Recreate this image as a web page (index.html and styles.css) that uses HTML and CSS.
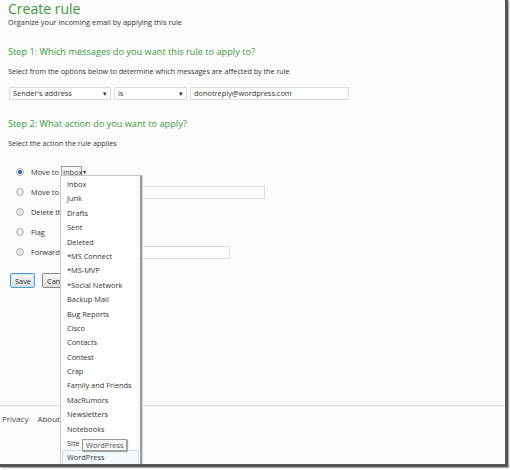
FILE: index.html
```html
<!DOCTYPE html>
<html>
<head>
<meta charset="utf-8">
<link rel="stylesheet" href="styles.css">
</head>
<body>
<div class="window">
  <div class="content">
    <h1 class="title">Create rule</h1>
    <p class="desc">Organize your incoming email by applying this rule</p>

    <h2 class="step">Step 1: Which messages do you want this rule to apply to?</h2>
    <p class="note">Select from the options below to determine which messages are affected by the rule</p>
    <div class="criteria">
      <div class="sel sel-field"><span>Sender's address</span><span class="arrow">&#9662;</span></div>
      <div class="sel sel-op"><span>is</span><span class="arrow">&#9662;</span></div>
      <div class="textbox tb-value">donotreply@wordpress.com</div>
    </div>

    <h2 class="step step2">Step 2: What action do you want to apply?</h2>
    <p class="note">Select the action the rule applies</p>

    <div class="actions">
      <div class="action">
        <span class="radio checked"></span>
        <span class="label">Move to</span>
        <span class="mini-sel">Inbox</span><span class="mini-arrow">&#9662;</span>
      </div>
      <div class="action">
        <span class="radio"></span>
        <span class="label">Move to</span>
        <span class="textbox tb-move"></span>
      </div>
      <div class="action">
        <span class="radio"></span>
        <span class="label">Delete the message</span>
      </div>
      <div class="action">
        <span class="radio"></span>
        <span class="label">Flag</span>
      </div>
      <div class="action">
        <span class="radio"></span>
        <span class="label">Forward to</span>
        <span class="textbox tb-forward"></span>
      </div>
    </div>

    <div class="buttons">
      <button class="btn btn-save">Save</button>
      <button class="btn">Cancel</button>
    </div>
  </div>

  <div class="footer">
    <span>Privacy</span>
    <span>About</span>
  </div>

  <ul class="dropdown">
    <li>Inbox</li>
    <li>Junk</li>
    <li>Drafts</li>
    <li>Sent</li>
    <li>Deleted</li>
    <li>*MS Connect</li>
    <li>*MS-MVP</li>
    <li>*Social Network</li>
    <li>Backup Mail</li>
    <li>Bug Reports</li>
    <li>Cisco</li>
    <li>Contacts</li>
    <li>Contest</li>
    <li>Crap</li>
    <li>Family and Friends</li>
    <li>MacRumors</li>
    <li>Newsletters</li>
    <li>Notebooks</li>
    <li>Site Mail</li>
    <li class="hover">WordPress</li>
  </ul>
  <div class="tooltip">WordPress</div>
</div>
</body>
</html>
```

FILE: styles.css
```css
* { box-sizing: border-box; }
html, body { margin: 0; padding: 0; background: #ffffff; }
body {
  font-family: "Open Sans", "Noto Sans", sans-serif;
  color: #333;
  width: 510px;
  height: 470px;
  overflow: hidden;
}
.window {
  position: relative;
  width: 508px;
  height: 467px;
  background: #fcfcfc;
  border-right: 3px solid #555;
  border-bottom: 3px solid #555;
  box-shadow: 1px 1px 1px #aaa;
  overflow: hidden;
  display: flex;
  flex-direction: column;
}
.content {
  padding: 0 8px;
  flex: 1;
}
.title {
  margin: 0;
  padding-top: 1px;
  font-weight: normal;
  font-size: 14px;
  line-height: 16px;
  color: #3a9a3a;
}
.desc {
  margin: 0;
  font-size: 7.4px;
  line-height: 10px;
  margin-top: 0;
  color: #333;
}
.step {
  margin: 18px 0 0 0;
  font-weight: normal;
  font-size: 9.2px;
  line-height: 13px;
  color: #3a9a3a;
}
.step2 { margin-top: 17px; }
.note {
  margin: 8px 0 0 0;
  font-size: 7.2px;
  line-height: 10px;
}
.criteria {
  display: flex;
  align-items: center;
  gap: 3px;
  margin-top: 11px;
  padding-left: 1px;
}
.sel, .textbox {
  height: 13px;
  border: 1px solid #dcdcdc;
  background: #fff;
  font-size: 7.4px;
  line-height: 11px;
  padding: 0 3px;
  display: flex;
  justify-content: space-between;
  align-items: center;
  color: #333;
}
.arrow { font-size: 7px; color: #333; }
.sel-field { width: 102px; }
.sel-op { width: 73px; }
.tb-value { width: 159px; }
.actions {
  margin-top: 14px;
  display: flex;
  flex-direction: column;
  gap: 0;
}
.action {
  height: 20px;
  display: flex;
  align-items: center;
  font-size: 7.4px;
  padding-left: 8px;
}
.radio {
  width: 8px;
  height: 8px;
  border-radius: 50%;
  border: 1px solid #b4b4b4;
  background: radial-gradient(circle, #f4f4f4 0, #dcdcdc 100%);
  margin-right: 7px;
  position: relative;
}
.radio.checked::after {
  content: "";
  position: absolute;
  left: 1px; top: 1px;
  width: 4px; height: 4px;
  border-radius: 50%;
  background: #2a5f9e;
}
.label { white-space: nowrap; }
.mini-sel {
  margin-left: 2px;
  border: 1px solid #999;
  height: 13px;
  line-height: 11px;
  padding: 0 1px;
  width: 21px;
}
.mini-arrow { font-size: 6px; margin-left: 1px; }
.textbox.tb-move { width: 200px; margin-left: 6px; }
.textbox.tb-forward { width: 155px; margin-left: 6px; }
.buttons {
  display: flex;
  gap: 7px;
  margin-top: 11px;
  padding-left: 2px;
}
.btn {
  font-family: inherit;
  font-size: 7.4px;
  height: 15px;
  padding: 0 4px;
  border: 1px solid #8a8a8a;
  border-radius: 2px;
  background: linear-gradient(#f6f6f6, #dedede);
  color: #333;
}
.btn-save {
  border-color: #4f9fd0;
  box-shadow: inset 0 0 0 1px #c9e6f7;
  width: 25px;
}
.footer {
  height: 59px;
  border-top: 1px solid #dcdcdc;
  display: flex;
  gap: 9px;
  padding: 7px 0 0 2px;
  font-size: 8px;
  color: #444;
  flex-shrink: 0;
}
.dropdown {
  position: absolute;
  left: 60px;
  top: 175px;
  width: 82px;
  height: 300px;
  margin: 0;
  padding: 1px 1px 0 1px;
  list-style: none;
  background: #fff;
  border: 1px solid #c8c8c8;
  border-right: 2px solid #9a9a9a;
  box-shadow: 1px 1px 1px #ddd;
}
.dropdown li {
  height: 14.4px;
  line-height: 14.4px;
  font-size: 7.4px;
  padding-left: 5px;
  color: #333;
  white-space: nowrap;
}
.dropdown li.hover {
  border: 1px solid #c2dcf2;
  background: #f5faff;
  line-height: 12.4px;
  padding-left: 4px;
}
.tooltip {
  position: absolute;
  left: 82px;
  top: 439px;
  height: 12px;
  padding: 0 3px;
  font-size: 7.4px;
  line-height: 10px;
  color: #555;
  background: #f7f7f7;
  border: 1px solid #9a9a9a;
  box-shadow: 1px 1px 1px #aaa;
}
```
